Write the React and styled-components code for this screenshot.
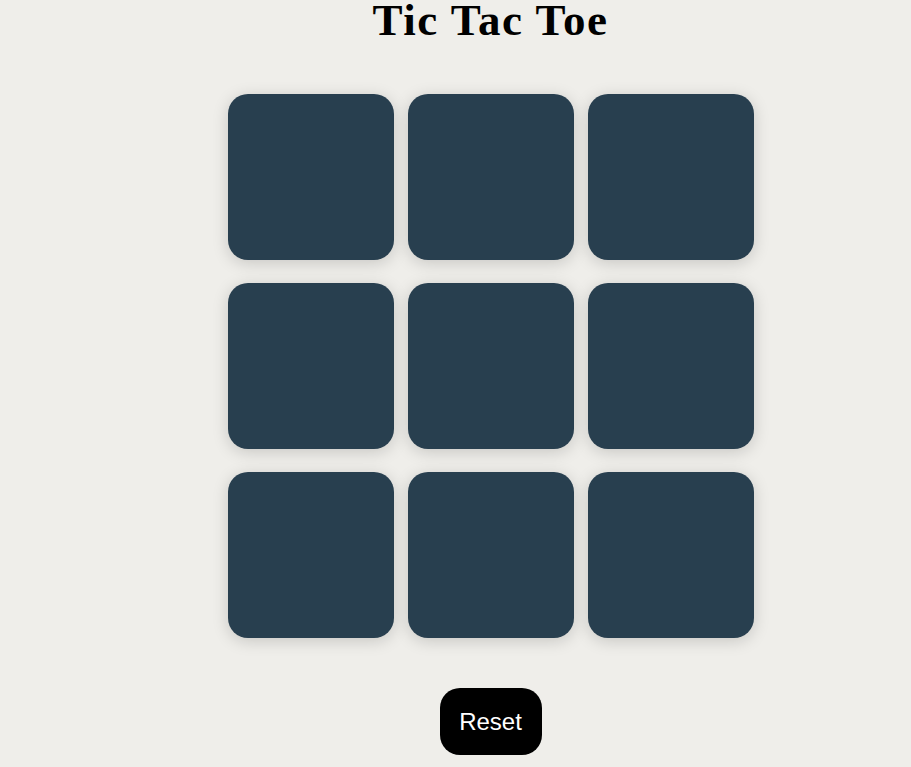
import { useState } from "react";
import styled, { createGlobalStyle } from "styled-components";

const GlobalStyle = createGlobalStyle`
  body {
    margin: 0;
    background: #efeeea;
    font-family: "Liberation Serif", serif;
  }
`;

const Page = styled.div`
  display: flex;
  flex-direction: column;
  align-items: center;
  padding-left: 70px;
  min-height: 767px;
  box-sizing: border-box;
`;

const Title = styled.h1`
  margin: 0;
  font-family: "Liberation Serif", serif;
  font-weight: bold;
  font-size: 45px;
  line-height: 40px;
  letter-spacing: 1.5px;
  color: #000;
`;

const Board = styled.div`
  display: grid;
  grid-template-columns: repeat(3, 166px);
  grid-auto-rows: 166px;
  column-gap: 14px;
  row-gap: 23px;
  margin-top: 54px;
`;

const Cell = styled.div`
  background: #283f4f;
  border-radius: 20px;
  box-shadow: 0 3px 16px rgba(0, 0, 0, 0.17);
  display: flex;
  align-items: center;
  justify-content: center;
  color: #efeeea;
  font-family: "Liberation Sans", sans-serif;
  font-size: 90px;
  cursor: pointer;
`;

const ResetButton = styled.button`
  margin-top: 50px;
  width: 102px;
  height: 67px;
  border: none;
  border-radius: 20px;
  background: #000;
  color: #fff;
  font-family: "Liberation Sans", Arial, sans-serif;
  font-size: 24px;
  cursor: pointer;
`;

const App = () => {
  const [cells, setCells] = useState(Array(9).fill(""));
  const [turn, setTurn] = useState("X");

  const play = (i) => {
    if (cells[i]) return;
    const next = [...cells];
    next[i] = turn;
    setCells(next);
    setTurn(turn === "X" ? "O" : "X");
  };

  return (
    <Page>
      <GlobalStyle />
      <Title>Tic Tac Toe</Title>
      <Board>
        {cells.map((c, i) => (
          <Cell key={i} onClick={() => play(i)}>
            {c}
          </Cell>
        ))}
      </Board>
      <ResetButton onClick={() => setCells(Array(9).fill(""))}>Reset</ResetButton>
    </Page>
  );
};

export default App;
